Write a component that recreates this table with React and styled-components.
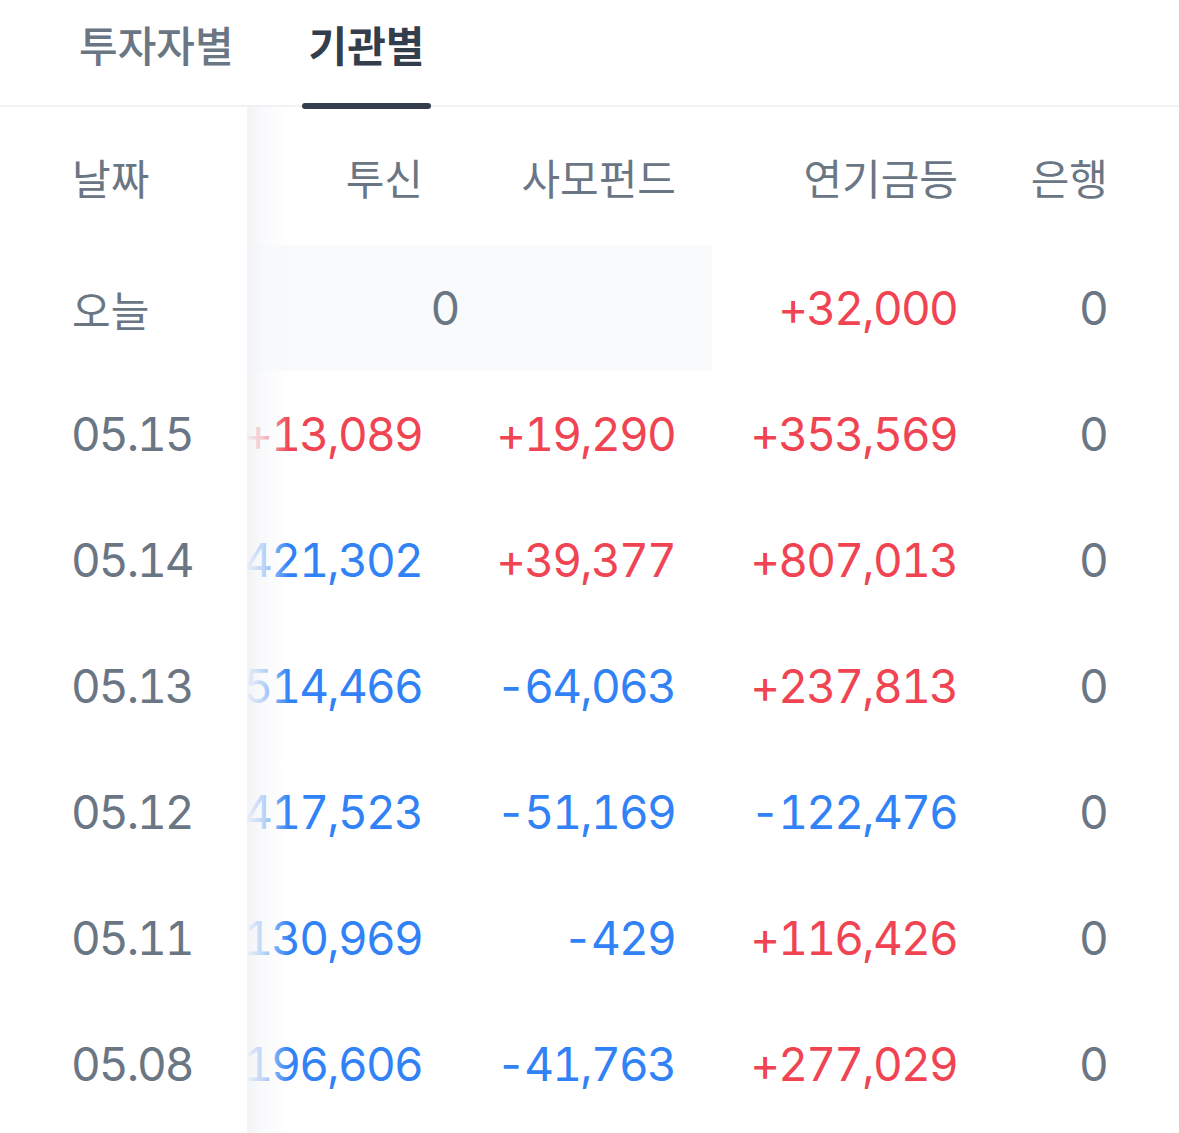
import React, { useLayoutEffect, useRef } from "react";
import styled, { createGlobalStyle } from "styled-components";

const GlobalStyle = createGlobalStyle`
  html, body { margin: 0; padding: 0; background: #ffffff; }
  body {
    font-family: "Noto Sans CJK KR", "Noto Sans", sans-serif;
    -webkit-font-smoothing: antialiased;
  }
  * { box-sizing: border-box; }
`;

const Page = styled.div`
  width: 1179px;
  min-height: 100vh;
  display: flex;
  flex-direction: column;
  overflow: hidden;
`;

const TabBar = styled.div`
  flex: none;
  display: flex;
  gap: 61px;
  padding-left: 72px;
  height: 107px;
  border-bottom: 2px solid #eff1f3;
`;

const Tab = styled.button`
  position: relative;
  border: 0;
  background: none;
  padding: 0 7px;
  margin: 0;
  height: 105px;
  display: flex;
  align-items: flex-start;
  padding-top: 14px;
  font-family: "Noto Sans CJK KR", sans-serif;
  font-size: 42px;
  line-height: 60px;
  font-weight: ${(p) => (p.$active ? 700 : 500)};
  color: ${(p) => (p.$active ? "#333d4b" : "#6b7684")};
  cursor: pointer;

  &::after {
    content: "";
    display: ${(p) => (p.$active ? "block" : "none")};
    position: absolute;
    left: 0;
    right: 0;
    bottom: -4px;
    height: 6px;
    border-radius: 3px;
    background: #333d4b;
  }
`;

const Table = styled.div`
  flex: 1;
  display: flex;
  align-items: stretch;
`;

const DateColumn = styled.div`
  position: relative;
  z-index: 1;
  flex: none;
  width: 247px;
  background: #ffffff;

  &::after {
    content: "";
    position: absolute;
    top: 0;
    bottom: 0;
    left: 100%;
    width: 42px;
    background: linear-gradient(
      90deg,
      rgba(242, 243, 246, 0.95) 0%,
      rgba(247, 248, 250, 0.7) 40%,
      rgba(255, 255, 255, 0) 100%
    );
    pointer-events: none;
  }
`;

const DateHeader = styled.div`
  height: 138px;
  display: flex;
  align-items: center;
  padding-left: 72px;
  font-family: "Noto Sans CJK KR", sans-serif;
  font-size: 42px;
  color: #6b7684;
`;

const DateCell = styled.div`
  height: 126px;
  display: flex;
  align-items: center;
  padding-left: ${(p) => (p.$korean ? "72px" : "71px")};
  font-family: ${(p) =>
    p.$korean ? '"Noto Sans CJK KR", sans-serif' : 'Inter, "Noto Sans", sans-serif'};
  font-size: ${(p) => (p.$korean ? "42px" : "46px")};
  font-variant-numeric: tabular-nums;
  letter-spacing: ${(p) => (p.$korean ? "0" : "-2px")};
  color: #6b7684;
`;

const ScrollArea = styled.div`
  flex: 1;
  min-width: 0;
  overflow-x: auto;
  overflow-y: hidden;
  scrollbar-width: none;
  &::-webkit-scrollbar { display: none; }
`;

const Grid = styled.div`
  display: grid;
  grid-template-columns: 282px 253px 282px 150px;
  grid-template-rows: 138px;
  grid-auto-rows: 126px;
  width: max-content;
  padding-right: 44px;
`;

const HeadCell = styled.div`
  display: flex;
  align-items: center;
  justify-content: flex-end;
  padding-right: 36px;
  font-family: "Noto Sans CJK KR", sans-serif;
  font-size: 42px;
  color: #6b7684;
  white-space: nowrap;
`;

const toneColor = { up: "#f04452", down: "#3182f6", flat: "#6b7684" };

const NumCell = styled.div`
  display: flex;
  align-items: center;
  justify-content: ${(p) => (p.$merged ? "center" : "flex-end")};
  padding-right: ${(p) => (p.$merged ? "0" : "37px")};
  grid-column: ${(p) => (p.$merged ? "span 2" : "auto")};
  background: ${(p) => (p.$merged ? "#f9fafb" : "transparent")};
  font-family: Inter, "Noto Sans", sans-serif;
  font-size: 46px;
  font-variant-numeric: tabular-nums;
  letter-spacing: -1.8px;
  color: ${(p) => toneColor[p.$tone]};
  white-space: nowrap;
`;

const columns = ["투신", "사모펀드", "연기금등", "은행"];

const rows = [
  { date: "05.15", values: ["+13,089", "+19,290", "+353,569", "0"] },
  { date: "05.14", values: ["-421,302", "+39,377", "+807,013", "0"] },
  { date: "05.13", values: ["-514,466", "-64,063", "+237,813", "0"] },
  { date: "05.12", values: ["-417,523", "-51,169", "-122,476", "0"] },
  { date: "05.11", values: ["-130,969", "-429", "+116,426", "0"] },
  { date: "05.08", values: ["-196,606", "-41,763", "+277,029", "0"] },
];

const toneOf = (v) => (v.startsWith("+") ? "up" : v.startsWith("-") ? "down" : "flat");

export default function App() {
  const scrollRef = useRef(null);

  useLayoutEffect(() => {
    if (scrollRef.current) scrollRef.current.scrollLeft = 70;
  }, []);

  return (
    <Page>
      <GlobalStyle />
      <TabBar>
        <Tab>투자자별</Tab>
        <Tab $active>기관별</Tab>
      </TabBar>
      <Table>
        <DateColumn>
          <DateHeader>날짜</DateHeader>
          <DateCell $korean>오늘</DateCell>
          {rows.map((r) => (
            <DateCell key={r.date}>{r.date}</DateCell>
          ))}
        </DateColumn>
        <ScrollArea ref={scrollRef}>
          <Grid>
            {columns.map((c) => (
              <HeadCell key={c}>{c}</HeadCell>
            ))}
            <NumCell $merged $tone="flat">0</NumCell>
            <NumCell $tone="up">+32,000</NumCell>
            <NumCell $tone="flat">0</NumCell>
            {rows.map((r) =>
              r.values.map((v, i) => (
                <NumCell key={r.date + i} $tone={toneOf(v)}>
                  {v}
                </NumCell>
              ))
            )}
          </Grid>
        </ScrollArea>
      </Table>
    </Page>
  );
}
